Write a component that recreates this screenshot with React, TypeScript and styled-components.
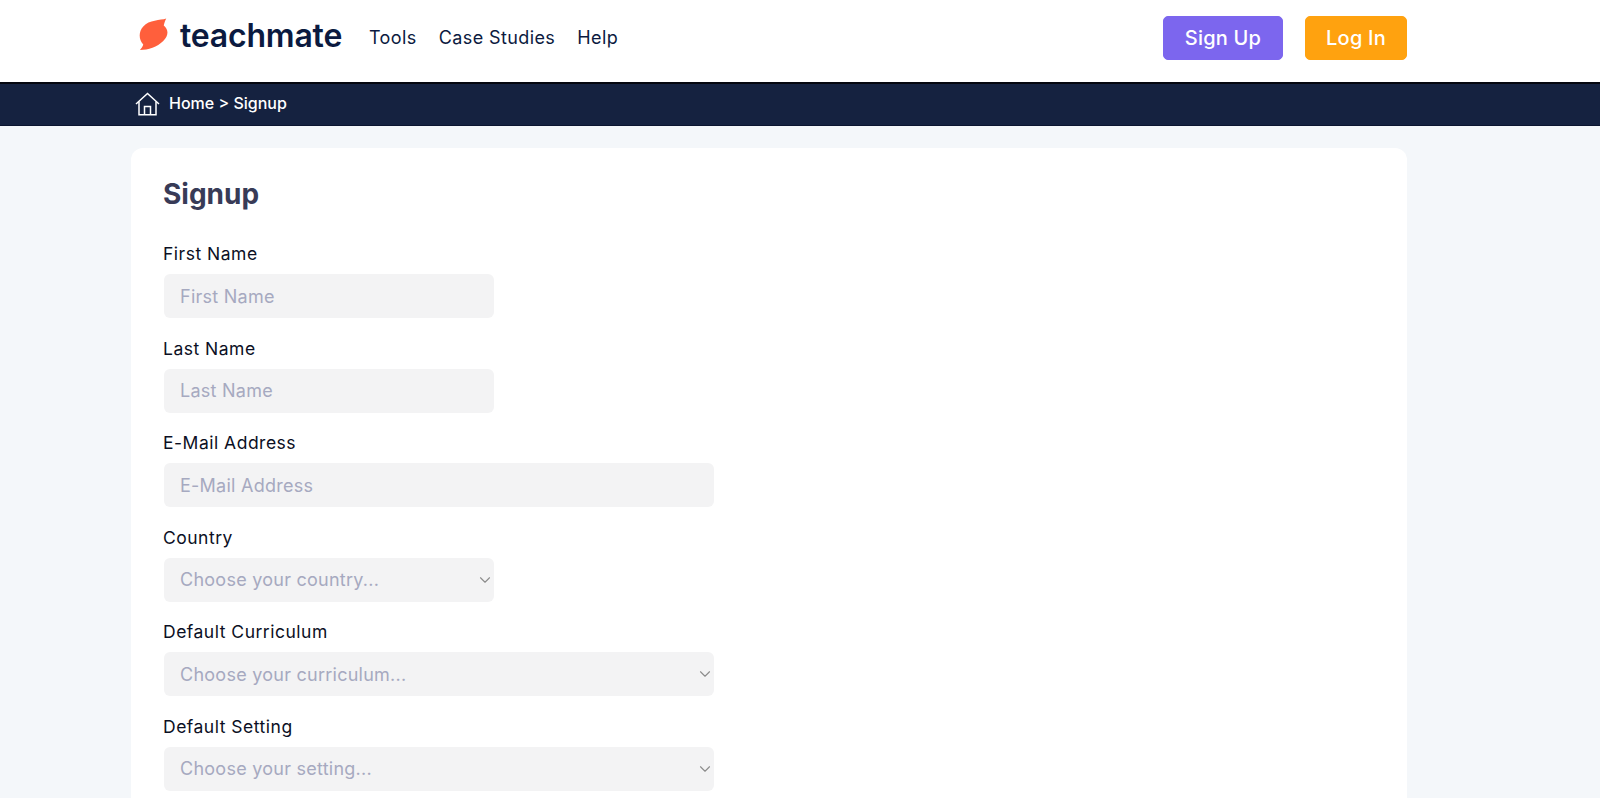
import { ChevronDown } from "lucide-react";
import styled, { createGlobalStyle } from "styled-components";

const GlobalStyle = createGlobalStyle`
  html, body {
    margin: 0;
    height: 798px;
    overflow: hidden;
    background: #f4f7fa;
    font-family: Inter, "Liberation Sans", sans-serif;
  }
  * {
    box-sizing: border-box;
  }
`;

const TopBar = styled.header`
  height: 82px;
  background: #fff;
`;

const Container = styled.div`
  width: 1276px;
  margin-left: 131px;
  display: flex;
  align-items: center;
  height: 100%;
`;

const HeaderRow = styled(Container)`
  padding-bottom: 6px;
`;

const LogoLink = styled.a`
  display: flex;
  align-items: center;
  margin: 0 0 4px 8px;
  gap: 11px;
  width: 230px;
`;

const LogoMark = styled.svg`
  margin-bottom: 4px;
`;

const LogoText = styled.span`
  font-size: 32px;
  font-weight: 600;
  letter-spacing: -0.2px;
  color: #0b1a40;
  line-height: 1;
`;

const Nav = styled.nav`
  display: flex;
  gap: 22px;
`;

const NavLink = styled.a`
  font-size: 18px;
  letter-spacing: 0.4px;
  color: #0b1a40;
  line-height: 1;
`;

const Actions = styled.div`
  display: flex;
  gap: 22px;
  margin-left: auto;
`;

const ActionButton = styled.button<{ $bg: string; $width: number }>`
  width: ${(p) => p.$width}px;
  height: 44px;
  border: 1px solid ${(p) => p.$bg};
  border-radius: 5px;
  background: ${(p) => p.$bg};
  color: #fff;
  font-family: inherit;
  font-size: 20px;
  font-weight: 500;
  letter-spacing: 0.2px;
`;

const Crumbs = styled.div`
  height: 44px;
  background: #152240;
  border-top: 2px solid #05070f;
  border-bottom: 1px solid #0b1530;
`;

const CrumbRow = styled(Container)`
  padding: 0 0 2px 4px;
  gap: 9px;
  color: #fff;
  font-size: 16px;
  font-weight: 500;
`;

const CrumbText = styled.span`
  margin-bottom: 2px;
`;

const Main = styled.main`
  padding: 22px 0 0 131px;
`;

const Card = styled.section`
  width: 1276px;
  padding: 28px 33px 60px;
  background: #fff;
  border-radius: 12px;
`;

const Title = styled.h1`
  margin: 0 0 28px -1px;
  font-size: 28px;
  font-weight: 700;
  line-height: 36px;
  color: #383b57;
`;

const Form = styled.form`
  display: flex;
  flex-direction: column;
  gap: 16.5px;
`;

const Field = styled.label`
  display: flex;
  flex-direction: column;
  gap: 7px;
`;

const FieldLabel = styled.span`
  margin-left: -1px;
  font-size: 17.5px;
  letter-spacing: 0.5px;
  line-height: 27px;
  color: #0b0f24;
`;

const Control = styled.div<{ $wide?: boolean }>`
  position: relative;
  width: ${(p) => (p.$wide ? 550 : 330)}px;
  height: 44px;
`;

const TextInput = styled.input`
  width: 100%;
  height: 100%;
  padding: 0 16px;
  border: 0;
  border-radius: 6px;
  background: #f3f3f4;
  font-family: inherit;
  font-size: 18px;
  letter-spacing: 0.25px;
  &::placeholder {
    color: #a6a9c0;
    opacity: 1;
  }
`;

const SelectInput = styled.select`
  width: 100%;
  height: 100%;
  padding: 0 16px;
  border: 0;
  border-radius: 6px;
  background: #f3f3f4;
  appearance: none;
  font-family: inherit;
  font-size: 18px;
  letter-spacing: 0.25px;
  color: #a6a9c0;
`;

const Caret = styled(ChevronDown)`
  position: absolute;
  top: 13px;
  right: 0;
  color: #8c8c8c;
`;

const Logo = () => (
  <LogoMark width="30" height="33" viewBox="0 0 29.5 33">
    <path
      fill="#ff5f3c"
      d="M27 0.5C21 2.5 10 1.5 4 8.5C-1 14-0.5 22 4 26.5C3.5 28.5 2 30.5 0.7 32C9 32 18 29 24 23C30 17 29 11 24.5 7.5C25 5 26 2.5 27 0.5Z"
    />
  </LogoMark>
);

const HomeIcon = () => (
  <svg width="25" height="24" viewBox="0 0 25 24" fill="none" stroke="#fff" strokeWidth="1.5">
    <path d="M1 12L12.5 1.5L24 12" />
    <path d="M4 9.5V22.7H21V9.5" />
    <path d="M9.5 22.5V14.5H15.5V22.5" />
  </svg>
);

const textFields = [
  { label: "First Name" },
  { label: "Last Name" },
  { label: "E-Mail Address", wide: true },
];

const selectFields = [
  { label: "Country", hint: "Choose your country..." },
  { label: "Default Curriculum", hint: "Choose your curriculum...", wide: true },
  { label: "Default Setting", hint: "Choose your setting...", wide: true },
];

export default function App() {
  return (
    <>
      <GlobalStyle />
      <TopBar>
        <HeaderRow>
          <LogoLink>
            <Logo />
            <LogoText>teachmate</LogoText>
          </LogoLink>
          <Nav>
            <NavLink>Tools</NavLink>
            <NavLink>Case Studies</NavLink>
            <NavLink>Help</NavLink>
          </Nav>
          <Actions>
            <ActionButton $bg="#7c66ee" $width={120}>Sign Up</ActionButton>
            <ActionButton $bg="#ffa20f" $width={102}>Log In</ActionButton>
          </Actions>
        </HeaderRow>
      </TopBar>
      <Crumbs>
        <CrumbRow>
          <HomeIcon />
          <CrumbText>Home &gt; Signup</CrumbText>
        </CrumbRow>
      </Crumbs>
      <Main>
        <Card>
          <Title>Signup</Title>
          <Form>
            {textFields.map((f) => (
              <Field key={f.label}>
                <FieldLabel>{f.label}</FieldLabel>
                <Control $wide={f.wide}>
                  <TextInput placeholder={f.label} />
                </Control>
              </Field>
            ))}
            {selectFields.map((f) => (
              <Field key={f.label}>
                <FieldLabel>{f.label}</FieldLabel>
                <Control $wide={f.wide}>
                  <SelectInput defaultValue="">
                    <option value="" disabled>
                      {f.hint}
                    </option>
                  </SelectInput>
                  <Caret size={18} strokeWidth={1.5} />
                </Control>
              </Field>
            ))}
          </Form>
        </Card>
      </Main>
    </>
  );
}
